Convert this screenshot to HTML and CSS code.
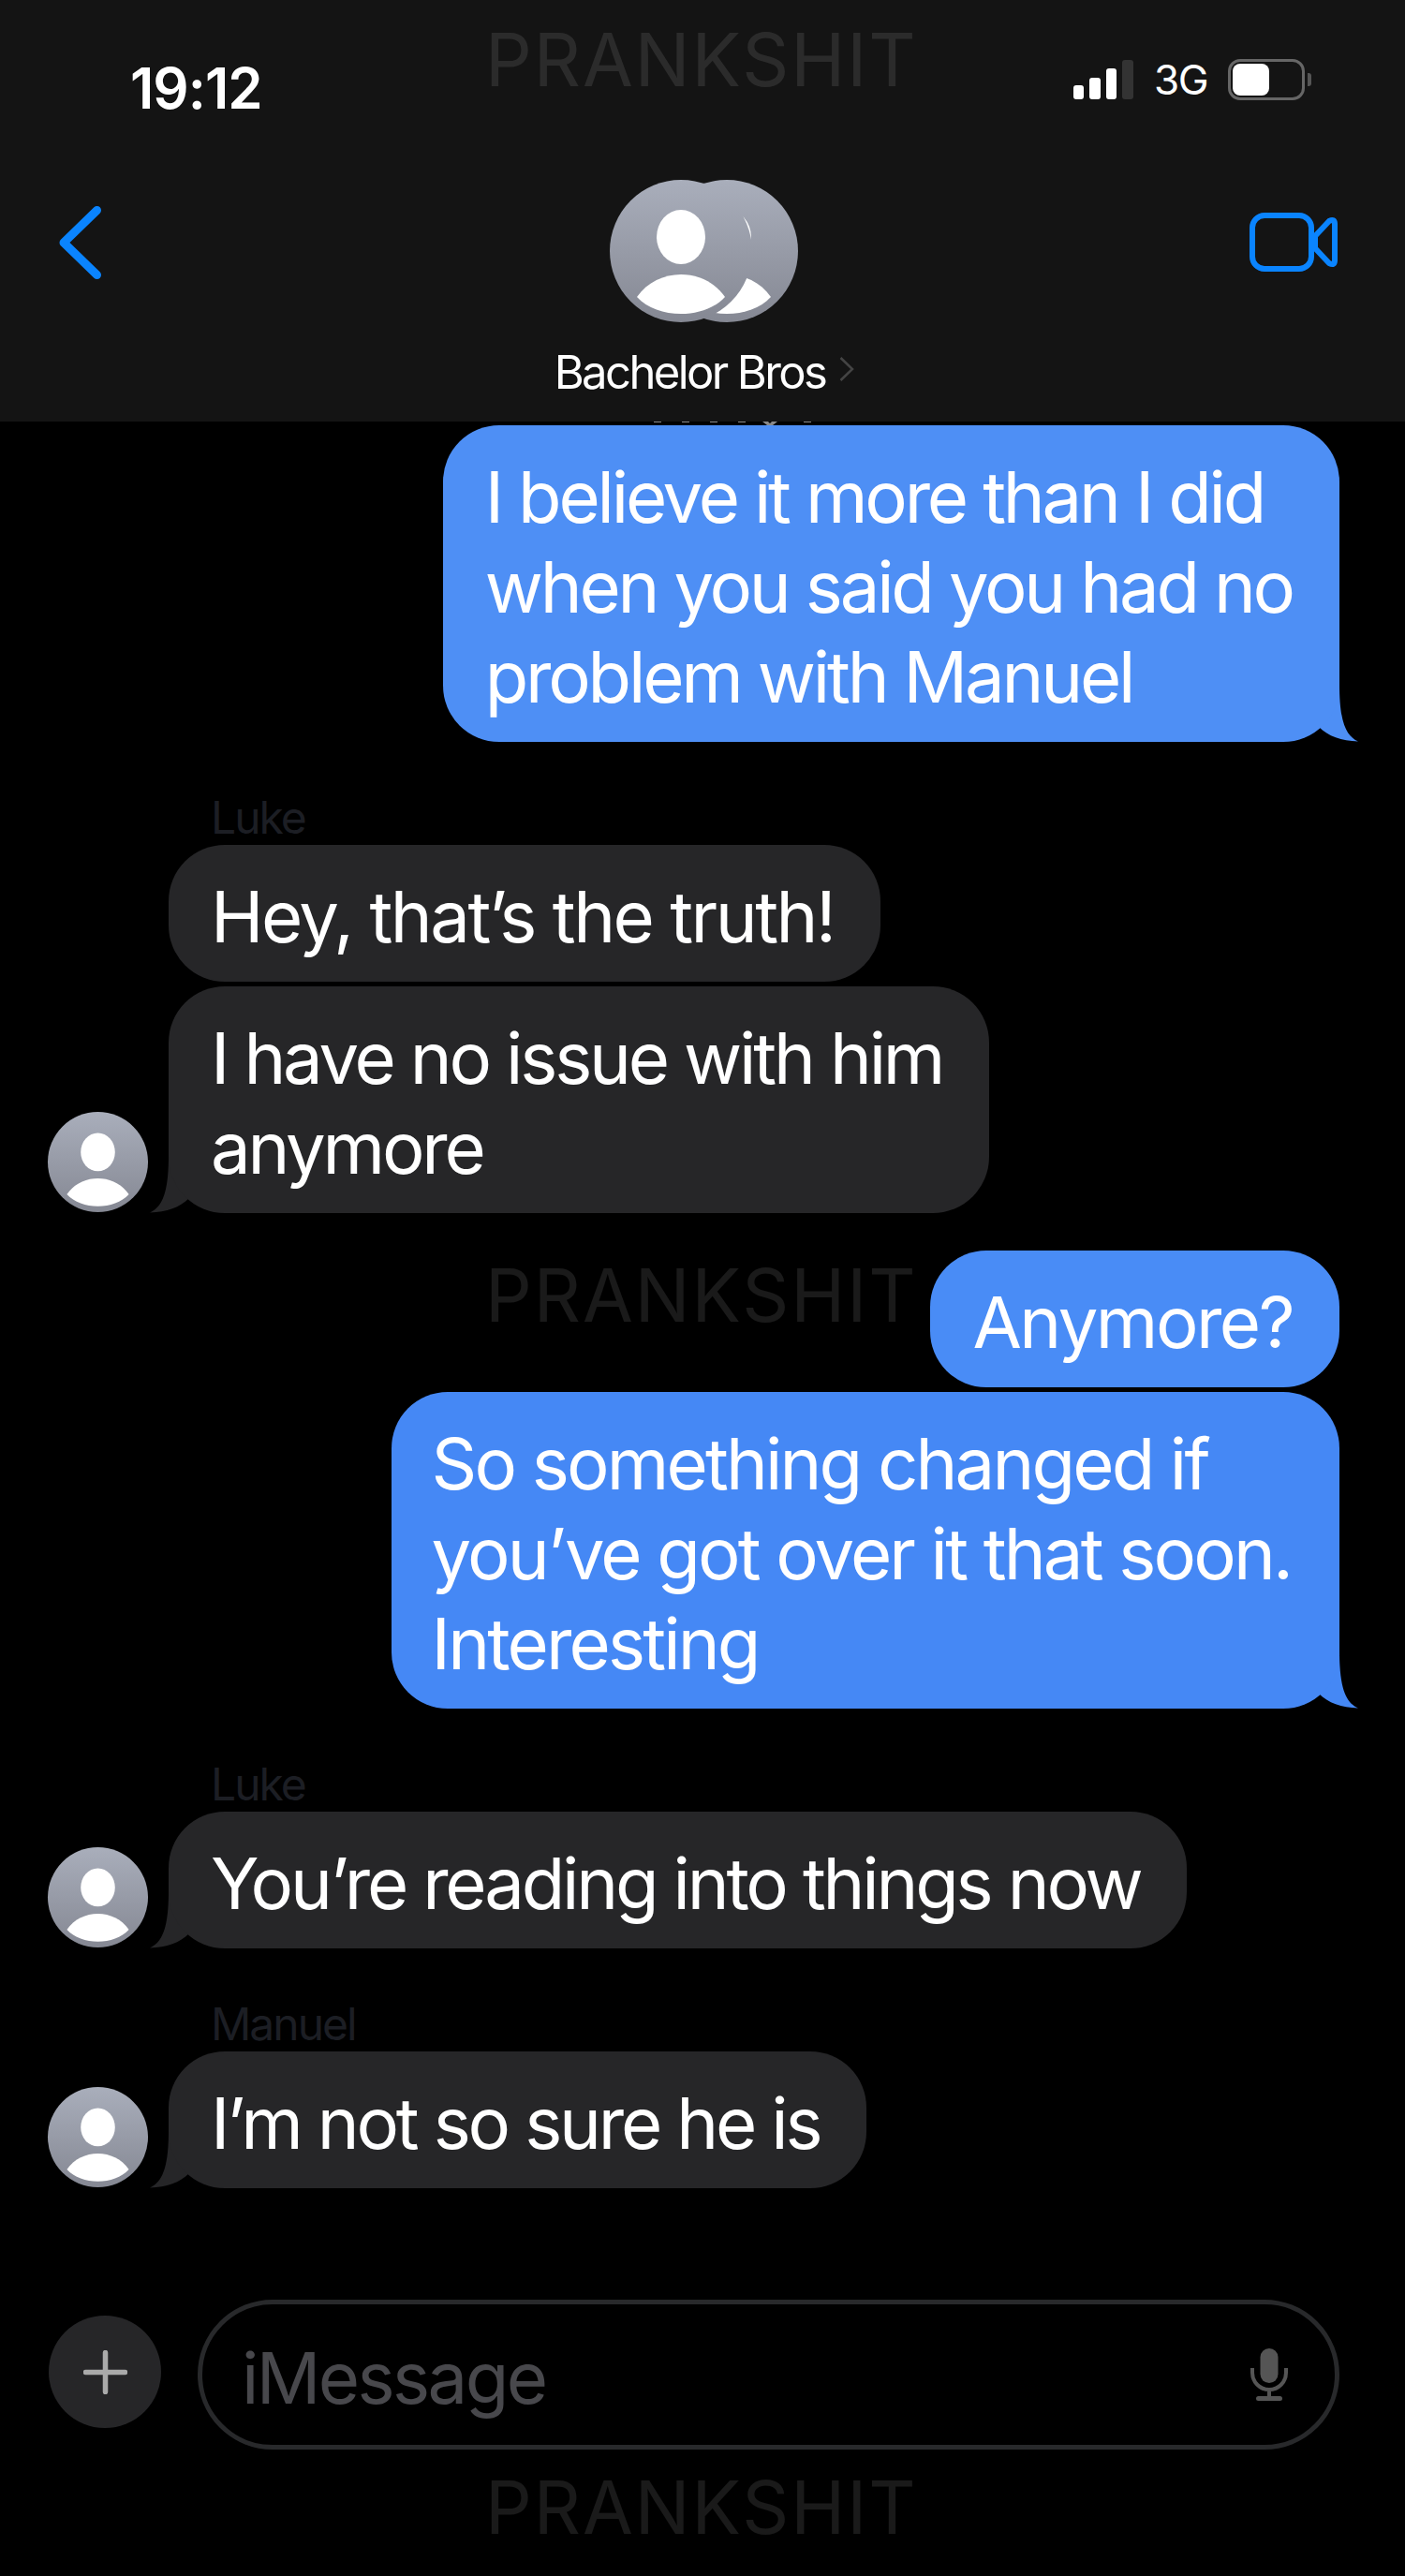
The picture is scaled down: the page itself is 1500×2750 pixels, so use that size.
FILE: index.html
```html
<!DOCTYPE html>
<html lang="en">
<head>
  <meta charset="UTF-8">
  <meta name="viewport" content="width=device-width, initial-scale=1.0">
  <title>Bachelor Bros</title>
  <link rel="stylesheet" href="styles.css">
</head>
<body>
  <!-- shared shapes: contact silhouette and bubble tail -->
  <svg class="defs" aria-hidden="true">
    <symbol id="person" viewBox="0 0 152 152">
      <ellipse cx="76" cy="61" rx="26" ry="29" fill="#fff"/>
      <path fill="#fff" d="M29 125C40 109 58 101 76 101C94 101 112 109 123 125C112 137 94 143 76 143C58 143 40 137 29 125Z"/>
    </symbol>
    <symbol id="tail" viewBox="0 0 80 61">
      <path d="M0 60C15 60 28 55 38 45C48 55 62 60 80 60.500C68 55 60 42 60 0L0 0Z"/>
    </symbol>
  </svg>

  <header class="top">
    <div class="status">
      <span class="time">19:12</span>
      <div class="status-icons">
        <div class="signal">
          <i class="bar bar1"></i><i class="bar bar2"></i><i class="bar bar3"></i><i class="bar bar4"></i>
        </div>
        <span class="network">3G</span>
        <div class="battery"><div class="battery-level"></div></div>
        <div class="battery-nub"></div>
      </div>
    </div>
    <nav class="nav">
      <svg class="back" viewBox="0 0 45 78"><path d="M40.500 4.500L5 39L40.500 73.500"/></svg>
      <div class="group">
        <div class="group-pics">
          <div class="avatar avatar-front"><svg><use href="#person"/></svg></div>
          <div class="avatar avatar-back"><svg><use href="#person"/></svg></div>
        </div>
        <div class="group-name">
          <span>Bachelor Bros</span>
          <svg class="more" viewBox="0 0 16 26"><path d="M1.500 1L14 13L1.500 25"/></svg>
        </div>
      </div>
      <svg class="video" viewBox="0 0 94 63">
        <rect x="3" y="3" width="63" height="57" rx="13"/>
        <path d="M70 25L85 9Q91 6 91 12V51Q91 57 85 54L70 38Z"/>
      </svg>
    </nav>
  </header>

  <!-- bottom edge of the line scrolled under the header -->
  <svg class="scrolled" viewBox="0 0 1500 4">
    <path d="M698 0h8v1h-8zM728 0h8v1h-8zM758 0h8v1h-8zM788 0h8v1h-8zM814 0l5 4h6l5-4h-6l-2 2l-2-2zM858 0h8v1h-8z"/>
  </svg>

  <main class="thread">
    <div class="row out">
      <div class="bubble blue-light has-tail">
        I believe it more than I did<br>when you said you had no<br>problem with Manuel
        <svg class="tail"><use href="#tail"/></svg>
      </div>
    </div>

    <div class="sender">Luke</div>
    <div class="row in">
      <div class="avatar-slot"></div>
      <div class="bubble gray loose">Hey, that’s the truth!</div>
    </div>
    <div class="row in tight">
      <div class="avatar avatar-small"><svg><use href="#person"/></svg></div>
      <div class="bubble gray has-tail">
        I have no issue with him<br>anymore
        <svg class="tail"><use href="#tail"/></svg>
      </div>
    </div>

    <div class="row out spaced">
      <div class="bubble blue-mid loose">Anymore?</div>
    </div>
    <div class="row out tight">
      <div class="bubble blue wide has-tail">
        So something changed if<br>you’ve got over it that soon.<br>Interesting
        <svg class="tail"><use href="#tail"/></svg>
      </div>
    </div>

    <div class="sender">Luke</div>
    <div class="row in">
      <div class="avatar avatar-small"><svg><use href="#person"/></svg></div>
      <div class="bubble gray has-tail">
        You’re reading into things now
        <svg class="tail"><use href="#tail"/></svg>
      </div>
    </div>

    <div class="sender">Manuel</div>
    <div class="row in">
      <div class="avatar avatar-small"><svg><use href="#person"/></svg></div>
      <div class="bubble gray has-tail">
        I’m not so sure he is
        <svg class="tail"><use href="#tail"/></svg>
      </div>
    </div>
  </main>

  <footer class="composer">
    <div class="plus">
      <svg viewBox="0 0 47 47"><path d="M23.500 2.500V44.500M2.500 23.500H44.500"/></svg>
    </div>
    <div class="input">
      <span class="placeholder">iMessage</span>
      <svg class="mic" viewBox="0 0 40 57">
        <rect class="mic-fill" x="10.500" y="0" width="19" height="37" rx="9.500"/>
        <path d="M2 21V26C2 36 10 44 20 44C30 44 38 36 38 26V21M20 44V52"/>
        <rect class="mic-fill" x="6" y="51" width="28" height="5" rx="2.500"/>
      </svg>
    </div>
  </footer>

  <div class="mark mark-top">PRANKSHIT</div>
  <div class="mark mark-middle">PRANKSHIT</div>
  <div class="mark mark-bottom">PRANKSHIT</div>
</body>
</html>
```

FILE: styles.css
```css
body {
  position: relative;
  width: 1500px;
  height: 2750px;
  margin: 0;
  overflow: hidden;
  background-color: #000;
  color: #fff;
  font-family: Inter, "Liberation Sans", sans-serif;
}
.defs {
  position: absolute;
  width: 0;
  height: 0;
}

/* header */
.top {
  height: 450px;
  background-color: #141414;
}
.status {
  display: flex;
  justify-content: space-between;
  height: 128px;
  padding: 60px 100px 0 139px;
  box-sizing: border-box;
}
.time {
  margin-top: 2px;
  font-size: 60px;
  font-weight: 600;
  line-height: 64px;
  letter-spacing: -1px;
}
.status-icons {
  display: flex;
  align-items: flex-start;
  height: 50px;
}
.signal {
  display: flex;
  align-items: flex-end;
  gap: 6px;
  height: 42px;
  margin-top: 4px;
}
.bar {
  width: 11.500px;
  border-radius: 3px;
  background-color: #fff;
}
.bar1 { height: 15px; }
.bar2 { height: 23px; }
.bar3 { height: 33px; }
.bar4 { height: 42px; background-color: #333; }
.network {
  margin-left: 22px;
  font-size: 44px;
  line-height: 50px;
  letter-spacing: -1.500px;
}
.battery {
  width: 82px;
  height: 44px;
  margin: 3px 0 0 22px;
  padding: 2px;
  box-sizing: border-box;
  border: 3px solid #666;
  border-radius: 13px;
}
.battery-level {
  width: 39px;
  height: 100%;
  border-radius: 8px;
  background-color: #fff;
}
.battery-nub {
  width: 4px;
  height: 14px;
  margin: 18px 0 0 3px;
  border-radius: 0 3px 3px 0;
  background-color: #555;
}
.nav {
  display: grid;
  grid-template-columns: 1fr auto 1fr;
  padding: 64px 72px 0 63px;
}
.back {
  width: 45px;
  height: 78px;
  margin-top: 28px;
  fill: none;
  stroke: #0a84ff;
  stroke-width: 9;
  stroke-linecap: round;
  stroke-linejoin: round;
}
.video {
  justify-self: end;
  width: 94px;
  height: 63px;
  margin-top: 35px;
  fill: none;
  stroke: #0a84ff;
  stroke-width: 6;
  stroke-linejoin: round;
}
.group {
  display: flex;
  flex-direction: column;
  align-items: center;
  margin-left: 13px;
}
.group-pics {
  display: flex;
}
.avatar {
  border-radius: 50%;
  background: linear-gradient(#a9aebb, #858893);
}
.avatar svg {
  display: block;
  width: 100%;
  height: 100%;
}
.avatar-front,
.avatar-back {
  width: 152px;
  height: 152px;
}
.avatar-front {
  position: relative;
  z-index: 1;
}
.avatar-back {
  margin-left: -103px;
}
.group-name {
  display: flex;
  align-items: center;
  gap: 15px;
  margin-top: 24px;
  font-size: 49px;
  line-height: 60px;
  letter-spacing: -2.600px;
}
.more {
  width: 16px;
  height: 26px;
  margin-bottom: 8px;
  fill: none;
  stroke: #444;
  stroke-width: 2.500;
}

.scrolled {
  display: block;
  width: 1500px;
  height: 4px;
  fill: #888;
}

/* messages */
.thread {
  display: flex;
  flex-direction: column;
}
.row {
  display: flex;
  align-items: flex-end;
}
.row.out {
  justify-content: flex-end;
  padding-right: 70px;
}
.row.in {
  gap: 22px;
  padding-left: 51px;
}
.tight {
  margin-top: 5px;
}
.spaced {
  margin-top: 40px;
}
.bubble {
  position: relative;
  padding: 28px 50px 22px 45px;
  border-radius: 60px;
  background-color: var(--fill);
  font-size: 76px;
  line-height: 96px;
  letter-spacing: -3.200px;
  white-space: nowrap;
}
.loose {
  letter-spacing: -2.500px;
}
.wide {
  padding-right: 52px;
  padding-left: 43px;
  letter-spacing: -2.850px;
}
.gray { --fill: #262628; }
.blue-light { --fill: #4e8ff5; }
.blue-mid { --fill: #498cf6; }
.blue { --fill: #4588f5; }
/* sits behind the bubble so it only shows in the rounded corner */
.tail {
  position: absolute;
  z-index: -1;
  right: -20px;
  bottom: 0;
  width: 80px;
  height: 61px;
  fill: var(--fill);
}
.in .tail {
  right: auto;
  left: -20px;
  transform: scaleX(-1);
}
.avatar-small {
  flex: none;
  width: 107px;
  height: 107px;
  margin-bottom: 1px;
}
.avatar-slot {
  width: 107px;
}
.sender {
  height: 58px;
  margin: 50px 0 0 225px;
  padding-top: 2px;
  color: #1c1e24;
  font-size: 48px;
  line-height: 58px;
  letter-spacing: -2px;
}

/* input bar */
.composer {
  display: flex;
  align-items: flex-start;
  gap: 39px;
  margin-top: 119px;
  padding: 0 70px 0 52px;
}
.plus {
  display: flex;
  flex: none;
  align-items: center;
  justify-content: center;
  width: 120px;
  height: 120px;
  margin-top: 17px;
  border-radius: 50%;
  background-color: #262628;
}
.plus svg {
  width: 47px;
  height: 47px;
  fill: none;
  stroke: #aaa;
  stroke-width: 5.500;
  stroke-linecap: round;
}
.input {
  display: flex;
  flex: 1;
  align-items: center;
  justify-content: space-between;
  height: 160px;
  padding: 0 50px 0 42px;
  box-sizing: border-box;
  border: 5px solid #28292b;
  border-radius: 80px;
  color: #48484c;
  font-size: 76px;
  letter-spacing: -2.600px;
}
.placeholder {
  padding-top: 6px;
}
.mic {
  width: 40px;
  height: 57px;
  fill: none;
  stroke: #555;
  stroke-width: 4;
}
.mic-fill {
  fill: #555;
  stroke: none;
}

/* watermark stamped over the page */
.mark {
  position: absolute;
  left: 518px;
  color: rgba(255, 255, 255, 0.1);
  font-size: 78px;
  line-height: 80px;
  letter-spacing: 2px;
}
.mark-top { top: 24px; }
.mark-middle { top: 1343px; }
.mark-bottom { top: 2637px; }
```
